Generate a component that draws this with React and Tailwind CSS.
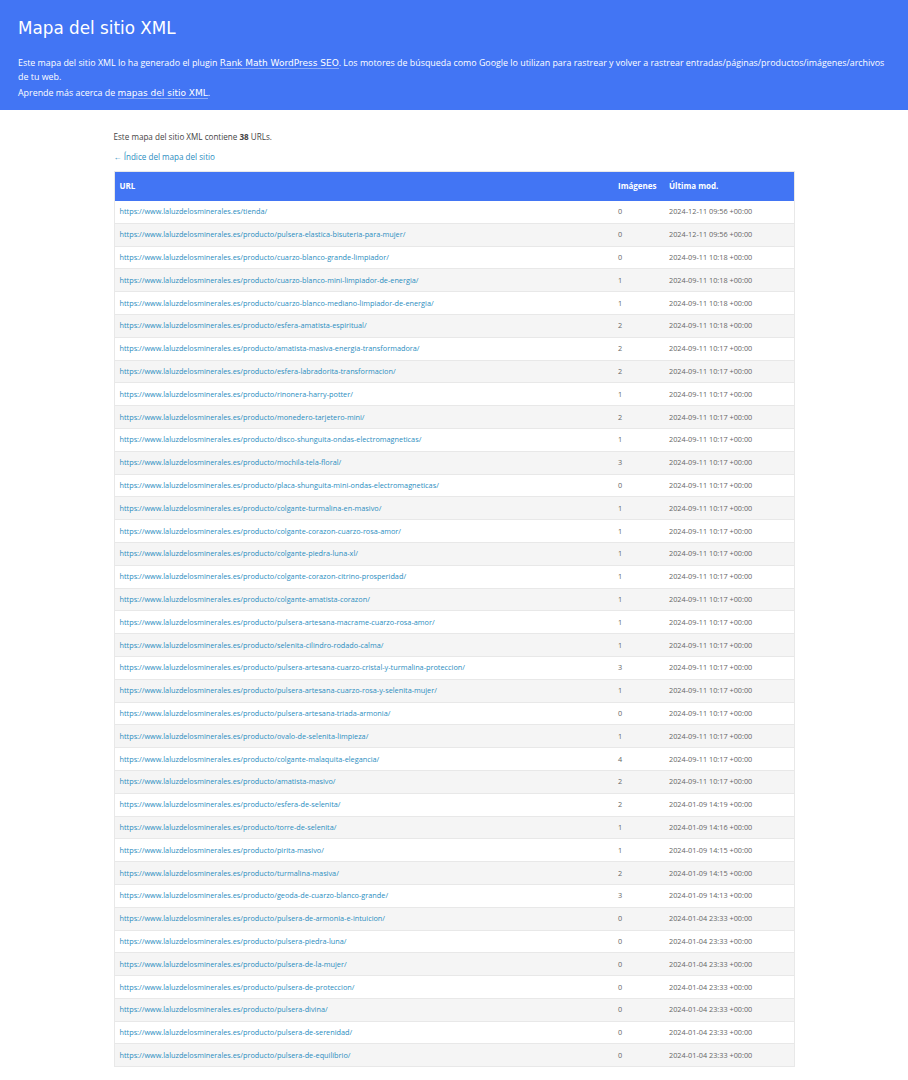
import React from "react";

const base = "https://www.laluzdelosminerales.es/";

const rows = [
  ["tienda/", 0, "2024-12-11 09:56 +00:00"],
  ["producto/pulsera-elastica-bisuteria-para-mujer/", 0, "2024-12-11 09:56 +00:00"],
  ["producto/cuarzo-blanco-grande-limpiador/", 0, "2024-09-11 10:18 +00:00"],
  ["producto/cuarzo-blanco-mini-limpiador-de-energia/", 1, "2024-09-11 10:18 +00:00"],
  ["producto/cuarzo-blanco-mediano-limpiador-de-energia/", 1, "2024-09-11 10:18 +00:00"],
  ["producto/esfera-amatista-espiritual/", 2, "2024-09-11 10:18 +00:00"],
  ["producto/amatista-masiva-energia-transformadora/", 2, "2024-09-11 10:17 +00:00"],
  ["producto/esfera-labradorita-transformacion/", 2, "2024-09-11 10:17 +00:00"],
  ["producto/rinonera-harry-potter/", 1, "2024-09-11 10:17 +00:00"],
  ["producto/monedero-tarjetero-mini/", 2, "2024-09-11 10:17 +00:00"],
  ["producto/disco-shunguita-ondas-electromagneticas/", 1, "2024-09-11 10:17 +00:00"],
  ["producto/mochila-tela-floral/", 3, "2024-09-11 10:17 +00:00"],
  ["producto/placa-shunguita-mini-ondas-electromagneticas/", 0, "2024-09-11 10:17 +00:00"],
  ["producto/colgante-turmalina-en-masivo/", 1, "2024-09-11 10:17 +00:00"],
  ["producto/colgante-corazon-cuarzo-rosa-amor/", 1, "2024-09-11 10:17 +00:00"],
  ["producto/colgante-piedra-luna-xl/", 1, "2024-09-11 10:17 +00:00"],
  ["producto/colgante-corazon-citrino-prosperidad/", 1, "2024-09-11 10:17 +00:00"],
  ["producto/colgante-amatista-corazon/", 1, "2024-09-11 10:17 +00:00"],
  ["producto/pulsera-artesana-macrame-cuarzo-rosa-amor/", 1, "2024-09-11 10:17 +00:00"],
  ["producto/selenita-cilindro-rodado-calma/", 1, "2024-09-11 10:17 +00:00"],
  ["producto/pulsera-artesana-cuarzo-cristal-y-turmalina-proteccion/", 3, "2024-09-11 10:17 +00:00"],
  ["producto/pulsera-artesana-cuarzo-rosa-y-selenita-mujer/", 1, "2024-09-11 10:17 +00:00"],
  ["producto/pulsera-artesana-triada-armonia/", 0, "2024-09-11 10:17 +00:00"],
  ["producto/ovalo-de-selenita-limpieza/", 1, "2024-09-11 10:17 +00:00"],
  ["producto/colgante-malaquita-elegancia/", 4, "2024-09-11 10:17 +00:00"],
  ["producto/amatista-masivo/", 2, "2024-09-11 10:17 +00:00"],
  ["producto/esfera-de-selenita/", 2, "2024-01-09 14:19 +00:00"],
  ["producto/torre-de-selenita/", 1, "2024-01-09 14:16 +00:00"],
  ["producto/pirita-masivo/", 1, "2024-01-09 14:15 +00:00"],
  ["producto/turmalina-masiva/", 2, "2024-01-09 14:15 +00:00"],
  ["producto/geoda-de-cuarzo-blanco-grande/", 3, "2024-01-09 14:13 +00:00"],
  ["producto/pulsera-de-armonia-e-intuicion/", 0, "2024-01-04 23:33 +00:00"],
  ["producto/pulsera-piedra-luna/", 0, "2024-01-04 23:33 +00:00"],
  ["producto/pulsera-de-la-mujer/", 0, "2024-01-04 23:33 +00:00"],
  ["producto/pulsera-de-proteccion/", 0, "2024-01-04 23:33 +00:00"],
  ["producto/pulsera-divina/", 0, "2024-01-04 23:33 +00:00"],
  ["producto/pulsera-de-serenidad/", 0, "2024-01-04 23:33 +00:00"],
  ["producto/pulsera-de-equilibrio/", 0, "2024-01-04 23:33 +00:00"],
];

const SitemapPage = () => {
  return (
    <div className="min-h-screen bg-white text-[#444] font-['Open_Sans',sans-serif]">
      {/* Header */}
      <div className="bg-[#4275f4] text-white px-[18px] pt-[16px] pb-[10px]">
        <h1 className="font-['DejaVu_Sans',sans-serif] text-[16.8px] leading-[24px] font-normal">
          Mapa del sitio XML
        </h1>
        <p className="mt-[16px] text-[8.9px] leading-[14px]">
          Este mapa del sitio XML lo ha generado el plugin{" "}
          <a className="font-['DejaVu_Sans',sans-serif] text-[9px] border-b border-white/40">
            Rank Math WordPress SEO
          </a>
          . Los motores de búsqueda como Google lo utilizan para rastrear y volver a rastrear
          entradas/páginas/productos/imágenes/archivos
          <br />
          de tu web.
        </p>
        <p className="mt-[2px] text-[8.9px] leading-[14px]">
          Aprende más acerca de{" "}
          <a className="font-['DejaVu_Sans',sans-serif] text-[9px] border-b border-white/40">
            mapas del sitio XML
          </a>
          .
        </p>
      </div>

      {/* Content */}
      <div className="w-3/4 mx-auto pt-[20px] pb-[14px]">
        <p className="text-[8.1px] leading-[14px]">
          Este mapa del sitio XML contiene <strong>38</strong> URLs.
        </p>
        <p className="mt-[6px] text-[8.1px] leading-[14px]">
          <a className="text-[#2b8dc0]">← Índice del mapa del sitio</a>
        </p>

        <table className="mt-[7px] w-full table-fixed border-collapse border border-[#e8e8e8] text-[7.3px] text-left">
          <colgroup>
            <col />
            <col className="w-[51px]" />
            <col className="w-[130px]" />
          </colgroup>
          <thead className="bg-[#4275f4] text-white">
            <tr className="h-[29px]">
              <th className="px-[5px] text-[8px] font-bold">URL</th>
              <th className="px-[5px] text-[8px] font-bold">Imágenes</th>
              <th className="px-[5px] text-[8px] font-bold">Última mod.</th>
            </tr>
          </thead>
          <tbody>
            {rows.map(([path, images, date], i) => (
              <tr
                key={path}
                className={`h-[22.8px] border-b border-[#e8e8e8] ${
                  i % 2 === 1 ? "bg-[#f5f5f5]" : "bg-white"
                }`}
              >
                <td className="px-[5px]">
                  <a className="text-[#2b8dc0]">{base + path}</a>
                </td>
                <td className="px-[5px] text-[#666]">{images}</td>
                <td className="px-[5px] text-[#666]">{date}</td>
              </tr>
            ))}
          </tbody>
        </table>
      </div>
    </div>
  );
};

export default SitemapPage;
